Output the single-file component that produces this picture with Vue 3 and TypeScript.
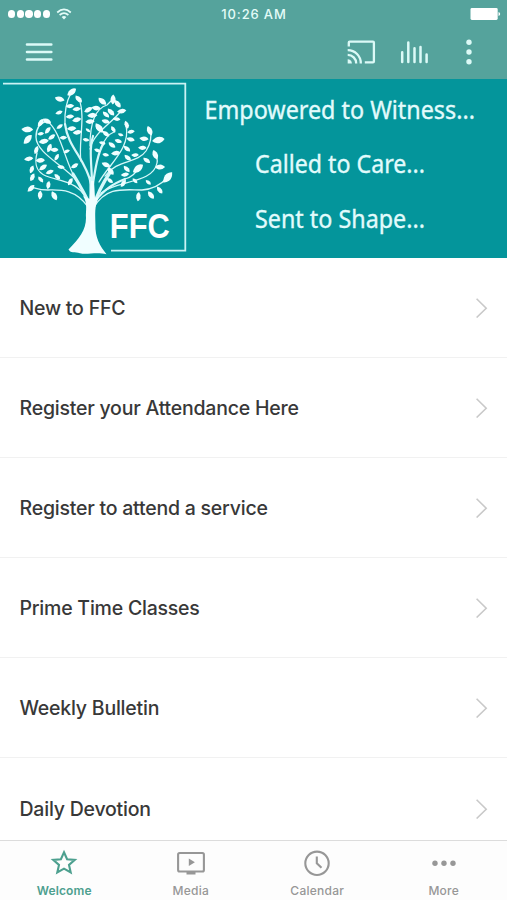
<script setup lang="ts">
interface Tab {
  label: string
  icon: 'star' | 'media' | 'clock' | 'more'
}

const items: string[] = [
  'New to FFC',
  'Register your Attendance Here',
  'Register to attend a service',
  'Prime Time Classes',
  'Weekly Bulletin',
  'Daily Devotion',
]

const tabs: Tab[] = [
  { label: 'Welcome', icon: 'star' },
  { label: 'Media', icon: 'media' },
  { label: 'Calendar', icon: 'clock' },
  { label: 'More', icon: 'more' },
]

// Each leaf: centre x, centre y, rotation in degrees, scale
type Leaf = [number, number, number, number]
const leaves: Leaf[] = [
  [71.7, 92, -30, 1.3], [59.7, 99, 25, 1.2], [78.7, 99, 55, 1.1], [59, 112.5, -10, 0.9],
  [70, 106, 5, 1], [76.7, 109, 5, 1], [88.3, 109.7, -20, 1.1], [96, 108, 15, 1.1],
  [70, 116.5, 5, 1], [76.7, 119.7, -5, 1.1], [92.3, 115.3, 5, 1.2], [90, 121.5, 5, 1.1],
  [59.7, 126.5, -25, 0.9], [71.7, 128.5, 5, 1.1], [77.3, 132.3, 0, 1.1], [63.3, 137.7, 5, 0.9],
  [88, 130.3, 50, 0.7], [86, 139.7, 20, 0.8], [27.3, 129.3, 10, 1.4], [27.7, 139.3, -40, 1.4],
  [40.7, 122.7, -45, 1.1], [47, 121, 35, 1.1], [47.7, 130.3, -40, 1], [40.7, 133.7, 0, 0.8],
  [51.7, 137, -25, 1], [43.7, 141.3, 0, 1.2], [36.3, 150, -60, 1], [49.3, 148, -60, 1.1],
  [54.3, 149.7, 10, 1], [56.7, 157.3, -50, 0.9], [66.7, 151.3, -10, 0.8], [28.7, 158.7, 0, 1.1],
  [40.3, 160.3, 5, 1.1], [43, 167.3, -25, 1.1], [31.7, 169.3, -60, 1], [49.7, 172, -10, 1],
  [74.7, 165.7, -20, 1], [97.3, 150.3, 30, 0.8], [102.3, 101.3, 50, 1.2], [113, 99.5, -80, 1.2],
  [117.7, 103.7, 60, 1.1], [121.7, 111, 0, 1.1], [111, 112, 55, 1.1], [116.7, 119, 20, 0.9],
  [106, 114.5, 50, 1], [105.7, 121.3, 25, 1], [99.3, 128, 60, 1.4], [106, 133.7, 45, 1],
  [113.3, 129.3, 70, 0.9], [112, 145, 45, 1], [115.7, 153, 0, 1.1], [118.3, 141, 25, 0.9],
  [120.7, 134.7, 30, 0.7], [126.7, 124.7, 80, 1], [131, 131.7, 0, 0.9], [130.7, 139.3, 25, 1],
  [127, 148.7, 50, 1], [127.7, 157.7, 50, 1], [135, 155, 5, 0.9], [126.7, 169, 55, 1],
  [106, 164.7, 30, 1.1], [105.7, 154.7, 20, 0.8], [102.3, 143, 25, 0.8], [149.7, 130.7, 75, 1.2],
  [144, 138.7, 15, 1.1], [158.3, 140, -3, 1.5], [142.3, 147.7, 10, 1], [146.7, 160.3, 45, 1],
  [155.3, 154.7, 75, 1.2], [160, 167, 8, 1.2], [138, 168.5, -30, 1.5], [167.7, 177.3, -42, 1.6],
  [159.7, 190, 60, 1], [151, 195, 60, 1.1], [138.3, 196.7, -75, 1.1], [148.3, 182.3, 50, 0.8],
  [135, 180.7, 55, 0.8], [123.3, 183.3, -45, 1], [125, 174.5, 0, 1], [110.7, 171, 60, 1.1],
  [110, 180.5, 50, 0.9], [32.3, 177.3, -55, 1], [31, 188.3, -35, 1.1], [40, 195, -75, 1.1],
  [54.3, 195.7, 70, 1.2], [48.3, 185, -70, 1], [40.7, 179.5, 60, 0.9], [57.3, 176.7, 50, 0.9],
  [70.3, 181.7, -50, 1], [61, 167, 20, 0.9],
]
</script>

<template>
  <main class="screen">
    <header class="top">
      <div class="status">
        <div class="signal">
          <i v-for="n in 5" :key="n" class="dot"></i>
          <svg class="wifi" width="16" height="12" viewBox="0 0 16 12" fill="none" stroke="#e4fcf8" stroke-width="1.7">
            <path d="M1.2 4.5Q8-1.7 14.8 4.5" />
            <path d="M3.6 7Q8 3.1 12.4 7" />
            <path d="M8 11.4L5.6 8.9Q8 7 10.4 8.9Z" fill="#e4fcf8" stroke="none" />
          </svg>
        </div>
        <span class="time">10:26 AM</span>
        <svg class="battery" width="31" height="12" viewBox="0 0 31 12" fill="#fff">
          <rect x=".5" width="27.2" height="12" rx="1.4" />
          <path d="M28.5 4Q30.2 4.5 30.2 6T28.5 8Z" />
        </svg>
      </div>
      <nav class="toolbar">
        <svg class="menu" width="28" height="20" viewBox="0 0 28 20" stroke="#dcfaf7" stroke-width="2.6" stroke-linecap="round">
          <path d="M2 2.5H26.3M2 10H26.3M2 17.5H26.3" />
        </svg>
        <svg class="cast" width="29" height="24" viewBox="0 0 29 24" fill="none" stroke="#dcfaf7" stroke-width="2.3">
          <path d="M1.8 6.5V2.5Q1.8 1.6 2.7 1.6H26Q26.9 1.6 26.9 2.5V21.5Q26.9 22.4 26 22.4H17.8" />
          <path d="M.7 10.2A13 13 0 0 1 13.8 23.4M.7 14.9A8.5 8.5 0 0 1 9.2 23.4" />
          <path d="M.7 19.2A4.2 4.2 0 0 1 4.9 23.4H.7Z" fill="#dcfaf7" stroke="none" />
        </svg>
        <svg class="bars" width="29" height="24" viewBox="0 0 29 24" stroke="#dcfaf7" stroke-width="2.5" stroke-linecap="round">
          <path d="M2.2 12.2V22M8.3 2.5V22M14.5 8.2V22M20.5 7V22M26.6 14.5V22" />
        </svg>
        <svg class="kebab" width="8" height="26" viewBox="0 0 8 26" fill="#dcfaf7">
          <circle cx="4" cy="3.2" r="2.7" /><circle cx="4" cy="13" r="2.7" /><circle cx="4" cy="22.8" r="2.7" />
        </svg>
      </nav>
    </header>

    <section class="banner">
      <svg width="507" height="179" viewBox="0 79 507 179">
        <path class="frame" d="M3 83.7H185.3V250.6H111" />
        <g class="branches">
          <path class="thick" d="M91 207Q84 192 73 174" />
          <path class="thick" d="M91 210Q91 190 91 178" />
          <path class="thick" d="M93 208Q98 190 111 171" />
          <path d="M88 207C75 188 58 190 48 190S36 188 31 187" />
          <path d="M90 207C82 180 58 181 46 176S35 161 37 153" />
          <path d="M76 180C65 166 36 153 36 137Q36 124 47 121" />
          <path d="M76 180C65 162 61 131 47 121" />
          <path class="mid" d="M91 184C86 159 68 148 65 124" />
          <path d="M65 124Q64 106 71 93" />
          <path d="M81 161C78 145 86 116 79 99" />
          <path class="mid" d="M92 195C93 170 88 151 93 136" />
          <path d="M90 146C90 118 97 108 107 105L113 99" />
          <path d="M90 149C94 132 111 124 121 111" />
          <path class="mid" d="M92 190C95 170 98 151 104 143" />
          <path d="M101 148Q106 135 114 132" />
          <path d="M99 182C110 163 131 148 126 125" />
          <path d="M105 176C117 159 137 164 146 151Q153 140 150 130" />
          <path class="mid" d="M94 202C106 188 113 184 125 179" />
          <path d="M125 179Q135 176 138 168" />
          <path d="M101 193C117 180 153 184 157 163Q158 158 155 155" />
          <path d="M94 207C107 186 124 190 142 190Q157 189 168 177" />
        </g>
        <path
          class="solid"
          d="M83 196C88 203 85.5 211 86 218C86 230 79 239 68.5 249.5C70 253 75 252 80 253.2C87 255 96 251.5 106.5 254.2C100 246 95 238 95.4 224C95.4 214 94 207 99 197L95 198L94 181H91L89.5 199Z"
        />
        <path
          v-for="(leaf, i) in leaves"
          :key="i"
          class="solid"
          d="M-4.2 .5Q-1.7-2.3 1-2.1Q3-1.9 4.2-.5Q2 2.4-.8 2.2Q-3 1.9-4.2 .5Z"
          :transform="`translate(${leaf[0]} ${leaf[1]}) rotate(${leaf[2]}) scale(${leaf[3]})`"
        />
        <text class="mark" x="109.8" y="237.5" textLength="60" lengthAdjust="spacingAndGlyphs">FFC</text>
        <text class="motto" x="204.5" y="119" textLength="270.5" lengthAdjust="spacingAndGlyphs">Empowered to Witness...</text>
        <text class="motto" x="255" y="173" textLength="170" lengthAdjust="spacingAndGlyphs">Called to Care...</text>
        <text class="motto" x="255" y="228" textLength="170" lengthAdjust="spacingAndGlyphs">Sent to Shape...</text>
      </svg>
    </section>

    <ul class="list">
      <li v-for="item in items" :key="item" class="row">
        <span>{{ item }}</span>
        <svg width="12" height="20" viewBox="0 0 12 20" fill="none" stroke="#c9c9c9" stroke-width="1.6">
          <path d="M.6 .8L10.2 10.2L.6 19.5" />
        </svg>
      </li>
    </ul>

    <nav class="tabs">
      <a v-for="(tab, i) in tabs" :key="tab.label" class="tab" :class="{ active: i === 0 }">
        <svg v-if="tab.icon === 'star'" width="28" height="28" viewBox="0 0 28 28" class="line">
          <path d="M14 3.3L17.1 10.2L24.8 10.9L19 15.9L20.7 23.5L14 19.6L7.3 23.5L9 15.9L3.2 10.9L10.9 10.2Z" />
        </svg>
        <svg v-else-if="tab.icon === 'media'" width="28" height="28" viewBox="0 0 28 28" class="line">
          <rect x="1.1" y="4" width="25.8" height="18.5" rx="1.5" />
          <path d="M11.8 9.6V17L17.9 13.3Z" class="fill" />
          <path d="M9.5 23H18.5V25.5H9.5Z" class="fill" />
        </svg>
        <svg v-else-if="tab.icon === 'clock'" width="28" height="28" viewBox="0 0 28 28" class="line">
          <circle cx="14" cy="14.3" r="11.7" />
          <path d="M13.8 7.5V14.3L18.5 18.8" />
        </svg>
        <svg v-else width="28" height="28" viewBox="0 0 28 28" class="fill">
          <circle cx="5" cy="14.3" r="2.7" /><circle cx="14" cy="14.3" r="2.7" /><circle cx="23" cy="14.3" r="2.7" />
        </svg>
        <span>{{ tab.label }}</span>
      </a>
    </nav>
  </main>
</template>

<style>
body {
  background: #fff;
}
</style>

<style scoped>
.screen {
  width: 507px;
  height: 900px;
  display: flex;
  flex-direction: column;
  overflow: hidden;
  background: #fff;
  font-family: Inter, "Liberation Sans", sans-serif;
}
.top {
  height: 79px;
  flex: none;
  background: #55a39c;
}
.status {
  height: 27px;
  padding: 0 7px 0 8px;
  display: grid;
  grid-template-columns: 1fr auto 1fr;
  align-items: center;
}
.signal {
  display: flex;
  align-items: center;
  gap: 1.4px;
}
.dot {
  width: 7.3px;
  height: 7.3px;
  border-radius: 50%;
  background: #fff;
}
.wifi {
  margin-left: 5px;
}
.time {
  font-size: 13px;
  font-weight: 500;
  line-height: 28px;
  letter-spacing: 0.85px;
  color: #e4fcf8;
}
.battery {
  justify-self: end;
  margin-right: -1px;
}
.toolbar {
  height: 50px;
  padding: 0 34.5px 0 25px;
  display: flex;
  align-items: center;
}
.cast {
  margin-left: auto;
}
.bars {
  margin-left: 24.5px;
}
.kebab {
  margin-left: 35.5px;
}
.banner {
  height: 178.5px;
  flex: none;
  background: #04959b;
}
.banner svg {
  display: block;
}
.frame {
  fill: none;
  stroke: #c9f2f4;
  stroke-width: 1.8;
}
.branches {
  fill: none;
  stroke: #d5f8fa;
  stroke-width: 1.3;
  stroke-linecap: round;
}
.mid {
  stroke-width: 2.2;
}
.thick {
  stroke-width: 3.2;
}
.solid {
  fill: #f0feff;
}
.mark {
  font: 700 35px "Liberation Sans", Arial, sans-serif;
  fill: #fff;
}
.motto {
  font: 400 25px "Noto Sans", "Open Sans", sans-serif;
  fill: #e2fbfc;
  stroke: #e2fbfc;
  stroke-width: 0.35;
}
.list {
  flex: 1;
  min-height: 0;
  margin: 0;
  padding: 0;
  list-style: none;
  overflow: hidden;
}
.row {
  height: 100.2px;
  box-sizing: border-box;
  padding: 1px 19px 0 19.5px;
  border-bottom: 1.5px solid #f1f1f1;
  display: flex;
  align-items: center;
  justify-content: space-between;
  font-size: 19.5px;
  font-weight: 500;
  letter-spacing: -0.22px;
  color: #383838;
}
.tabs {
  height: 60px;
  flex: none;
  box-sizing: border-box;
  border-top: 1px solid #dcdcdc;
  padding-left: 1px;
  display: grid;
  grid-template-columns: repeat(4, 1fr);
  background: #fdfdfd;
}
.tab {
  display: flex;
  flex-direction: column;
  align-items: center;
  padding-top: 8px;
  color: #979797;
  font-size: 12px;
  font-weight: 500;
  letter-spacing: 0.25px;
}
.tab span {
  line-height: 16px;
  margin-top: 6px;
}
.active {
  color: #4da08f;
  font-weight: 600;
  letter-spacing: 0.1px;
}
.line {
  fill: none;
  stroke: currentColor;
  stroke-width: 2.1;
}
.fill {
  fill: currentColor;
  stroke: none;
}
</style>
